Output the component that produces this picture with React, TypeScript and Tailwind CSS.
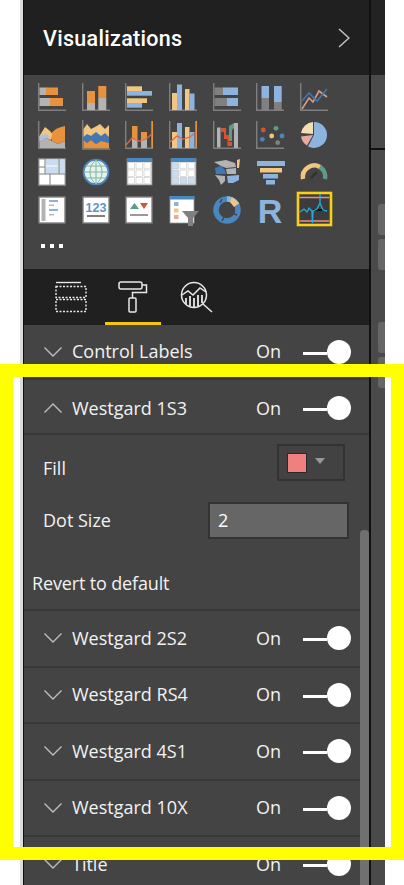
import React from "react";

const AXIS = "#7f7f7f";
const ORANGE = "#e8923f";
const CREAM = "#f2c680";
const BLUE = "#8db4de";
const GREY = "#b3b3b3";
const DARK = "#808080";
const DEEP = "#4a86c0";

const Axis = () => <path d="M0.7 0V27.3H28" fill="none" stroke={AXIS} strokeWidth="1.4" />;

const R = ({ x, y, w, h, c }: { x: number; y: number; w: number; h: number; c: string }) => (
  <rect x={x} y={y} width={w} height={h} fill={c} />
);

const Card = () => <rect x="1" y="1" width="26" height="26" fill="#fff" stroke={AXIS} strokeWidth="1.4" />;

const GridTable = ({ shaded }: { shaded?: boolean }) => (
  <>
    <rect x="2" y="1" width="25" height="26" fill="#fff" stroke={AXIS} strokeWidth="1" />
    <rect x="2" y="0" width="25" height="4" fill={DEEP} />
    {[4.5, 12, 19.5].map((y) =>
      [3, 11, 19].map((x) => (
        <rect key={`${x}-${y}`} x={x} y={y} width="6.6" height="6.4" fill={shaded && (x === 3 || y === 19.5) ? "#c9dcf0" : "#fff"} stroke="#bbb" strokeWidth="0.5" />
      ))
    )}
  </>
);

const icons: React.ReactNode[] = [
  <><Axis /><R x={1.5} y={4.5} w={7} h={7.5} c={GREY} /><R x={8} y={4.5} w={12} h={7.5} c={ORANGE} /><R x={1.5} y={15} w={11} h={8} c={GREY} /><R x={12} y={15} w={13} h={8} c={ORANGE} /></>,
  <><Axis /><R x={5} y={8} w={8} h={12} c={ORANGE} /><R x={5} y={20} w={8} h={7} c={GREY} /><R x={16.3} y={3} w={8} h={12} c={ORANGE} /><R x={16.3} y={15} w={8} h={12} c={GREY} /></>,
  <><Axis /><R x={2} y={3.3} w={15} h={4.7} c={CREAM} /><R x={2} y={8} w={25} h={4.7} c={BLUE} /><R x={2} y={15.3} w={20} h={4.7} c={CREAM} /><R x={2} y={20} w={15} h={4.7} c={BLUE} /></>,
  <><Axis /><R x={3} y={10} w={5} h={17} c={CREAM} /><R x={8} y={1.5} w={5} h={25.5} c={BLUE} /><R x={16} y={6} w={4.5} h={21} c={CREAM} /><R x={20.5} y={10.5} w={5} h={16.5} c={BLUE} /></>,
  <><Axis /><R x={1.5} y={4.5} w={9} h={7.5} c={DARK} /><R x={10} y={4.5} w={15} h={7.5} c={BLUE} /><R x={1.5} y={15} w={13} h={8} c={DARK} /><R x={14} y={15} w={11} h={8} c={BLUE} /></>,
  <><Axis /><R x={5.5} y={3} w={7.5} h={12} c={BLUE} /><R x={5.5} y={15} w={7.5} h={12} c={DARK} /><R x={18} y={3} w={7.7} h={16} c={BLUE} /><R x={18} y={19} w={7.7} h={8} c={DARK} /></>,
  <><Axis /><polyline points="2,26 9,15 13,19 19,8 27,14" fill="none" stroke="#d99a8a" strokeWidth="1.6" /><polyline points="2,18 9,10 17,18 27,6" fill="none" stroke="#3f78b5" strokeWidth="1.6" /></>,

  <><Axis /><polygon points="1.5,27 1.5,21 8,17 14,20 20,23 27,20 27,27" fill={GREY} /><polygon points="12,13 18,8 23,6 27,5 27,20 20,23 14,20" fill={ORANGE} /><polygon points="1.5,15 7,6 12,10 14,13 13,19 8,17 1.5,21" fill={CREAM} /><polygon points="1.5,15 8,13 12,16 8,17 1.5,20" fill="#a9c3e0" /></>,
  <><path d="M0.7 -1V28H28" fill="none" stroke={AXIS} strokeWidth="1.4" /><polygon points="1.5,8 5,3 9,8 13,6 18,3 23,8 27,4 27,16 1.5,16" fill={CREAM} /><polygon points="1.5,16 5,13 9,15 14,11 19,15 23,12 27,16 27,22 19,20 14,23 9,19 5,22 1.5,19" fill="#3f78b5" /><polygon points="1.5,19 5,22 9,19 14,23 19,20 27,22 27,27.3 1.5,27.3" fill={ORANGE} /></>,
  <><path d="M0.7 0V27.3H27.3V0" fill="none" stroke={AXIS} strokeWidth="1.4" /><R x={26.4} y={0} w={1.6} h={27} c={ORANGE} /><R x={7} y={5} w={5.5} h={13} c={ORANGE} /><R x={7} y={18} w={5.5} h={9} c={GREY} /><R x={16} y={11} w={6} h={7} c={ORANGE} /><R x={16} y={18} w={6} h={9} c={GREY} /><polyline points="1,24 7,17 14,20 21,18 27,13" fill="none" stroke="#d9694a" strokeWidth="1.3" /></>,
  <><path d="M0.7 0V27.3H27.3V0" fill="none" stroke={AXIS} strokeWidth="1.4" /><R x={26.4} y={0} w={1.6} h={27} c={ORANGE} /><R x={3} y={11} w={5} h={16} c={CREAM} /><R x={8} y={2} w={5} h={25} c={BLUE} /><R x={16} y={6} w={4.5} h={21} c={CREAM} /><R x={20.5} y={11} w={5} h={16} c={BLUE} /><polyline points="1,21 8,15 14,18 21,16 27,11" fill="none" stroke="#d9694a" strokeWidth="1.3" /></>,
  <><Axis /><R x={4} y={6.5} w={3.5} h={20} c={GREY} /><R x={21} y={2} w={4} h={25} c={GREY} /><polygon points="8,7 13,7 13,14 16,14 16,21 19,21 19,25 14.5,25 14.5,18 11,18 11,11 8,11" fill="#d9532e" /><polygon points="16,5 21,2 21,7 19,9 19,20 16,20" fill="#5e9c86" /></>,
  <><Axis /><circle cx="7.3" cy="9" r="2.4" fill="#d9532e" /><circle cx="20" cy="7.3" r="2.4" fill="#5e9c86" /><circle cx="6.3" cy="18.3" r="2.4" fill={DEEP} /><circle cx="15.7" cy="15" r="2.4" fill={CREAM} /><circle cx="26" cy="15" r="2.4" fill={DEEP} /><circle cx="21.7" cy="21.7" r="2.4" fill={DARK} /></>,
  <><path d="M14 1A13 13 0 1 1 8 25.5L14 14Z" fill={BLUE} /><path d="M7 24.5A13 13 0 0 1 1 15.5L13 14Z" fill="#e8aaa0" /><path d="M1 12A13 13 0 0 1 13 1V13Z" fill="#f5deb3" /></>,

  <><rect x="0.7" y="0.7" width="26.6" height="26.6" fill="#fff" stroke={AXIS} strokeWidth="1.4" /><R x={7.5} y={1.5} w={13} h={6} c="#c9dcf0" /><R x={21} y={1.5} w={5.5} h={14} c="#c9dcf0" /><R x={7.5} y={8.5} w={13} h={7} c="#c9dcf0" /><path d="M0 9H7M0 16H28M12 16V28M7 1V16M21 1V16" stroke={AXIS} strokeWidth="1" /></>,
  <><circle cx="14" cy="14" r="12.3" fill="#e6f1ee" stroke={DEEP} strokeWidth="2" /><path d="M2 14H26M4 8H24M4 20H24M14 2V26M14 2C6 8 6 20 14 26M14 2C22 8 22 20 14 26" fill="none" stroke="#7fb59f" strokeWidth="1" /></>,
  <GridTable />,
  <GridTable shaded />,
  <><polygon points="1,4 13,2 22,5 23,9 13,10 8,8" fill={GREY} /><polygon points="24,2 27,1 26,10 24,10" fill={CREAM} /><polygon points="2,10 8,8 12,12 13,16 3,16" fill="#3f78b5" /><polygon points="13,11 23,10 23,16 14,16" fill={GREY} /><polygon points="2,17 12,18 12,23 8,27 6,22" fill={GREY} /><polygon points="14,18 26,17 26,22 20,25 15,25" fill={BLUE} /></>,
  <><R x={1} y={3} w={28} h={5} c={BLUE} /><R x={4} y={10} w={22} h={4.5} c={CREAM} /><R x={7} y={16} w={15} h={4.5} c={BLUE} /><R x={10} y={22} w={9} h={4.5} c={BLUE} /></>,
  <><path d="M3 21A11.5 11.5 0 0 1 20 9" fill="none" stroke={CREAM} strokeWidth="4.5" /><path d="M20 9A11.5 11.5 0 0 1 25 21" fill="none" stroke="#5e9c86" strokeWidth="4.5" /><path d="M11 20L17 14" stroke="#333" strokeWidth="2.5" /></>,

  <><Card /><R x={3.5} y={3} w={4} h={22} c={GREY} /><R x={11} y={4} w={9} h={2} c={BLUE} /><R x={11} y={8.5} w={5} h={1.4} c={GREY} /><R x={11} y={13} w={9} h={2} c={BLUE} /><R x={11} y={18} w={5} h={1.4} c={GREY} /></>,
  <><Card /><text x="14" y="15.5" textAnchor="middle" fontFamily="'Liberation Sans', sans-serif" fontSize="12.5" fontWeight="700" fill="#5b93cc">123</text><R x={5} y={19} w={18} h={2} c="#808080" /></>,
  <><Card /><polygon points="5,13 9.5,7 14,13" fill="#5e9c86" /><polygon points="15,7 23,7 19,13" fill="#d9532e" /><R x={5} y={18} w={18} h={2} c="#999" /></>,
  <><rect x="1" y="1" width="24" height="26" fill="#fff" stroke="#999" strokeWidth="0.8" /><R x={0.5} y={0} w={25} h={3.5} c={DEEP} /><R x={5} y={6} w={4.5} h={4} c={BLUE} /><R x={5} y={12.5} w={4.5} h={4} c={CREAM} /><R x={5} y={19} w={4.5} h={4} c="#e8aaa0" /><polygon points="13,15 30,15 24,22 24,30 19,30 19,22" fill="#808080" /></>,
  <><circle cx="14" cy="14" r="11" fill="none" stroke={DEEP} strokeWidth="5.5" /><path d="M14 3A11 11 0 0 1 24 9" fill="none" stroke={BLUE} strokeWidth="5.5" /><path d="M19 1L26 7L21 11L17 6Z" fill={CREAM} /><path d="M9 3L7 7M24 19L19 17M9 25L11 21" stroke="#444" strokeWidth="1.5" /></>,
  <text x="14" y="27" textAnchor="middle" fontFamily="'Liberation Sans', sans-serif" fontSize="34" fontWeight="700" fill={BLUE}>R</text>,
  <><rect x="-2" y="-3" width="33" height="32" fill="#3c3c3c" stroke="#f7d117" strokeWidth="2.6" /><path d="M-0.5 1.5H29.5M-0.5 25H29.5" stroke="#e8908a" strokeWidth="1.6" /><path d="M13 14H26" stroke="#111" strokeWidth="2" /><path d="M0 16L4 13L7 16L9 12L12 15L12.4 27L13 15L17 13L20 7V-2V7L23 14L27 15" fill="none" stroke="#22aee6" strokeWidth="1.3" /></>,
];

const Chevron = ({ up }: { up?: boolean }) => (
  <svg width="18" height="10" viewBox="0 0 18 10" className="shrink-0">
    <path d={up ? "M0.5 9.5L9 1L17.5 9.5" : "M0.5 0.5L9 9L17.5 0.5"} fill="none" stroke="#bdbdbd" strokeWidth="1.4" />
  </svg>
);

const Toggle = () => (
  <div className="flex items-center ml-[22px]">
    <div className="w-[24px] h-[3px] mt-[3px] bg-white" />
    <div className="w-[24px] h-[24px] rounded-full bg-white" />
  </div>
);

const Row = ({ label, up, className }: { label: string; up?: boolean; className: string }) => (
  <div className={`shrink-0 flex items-center pl-[20px] pr-[18px] border-b-2 border-[#383838] ${className}`}>
    <Chevron up={up} />
    <span className="ml-[10px] text-[18px] text-[#f2f2f2]">{label}</span>
    <span className="ml-auto text-[18px] text-[#f2f2f2]">On</span>
    <Toggle />
  </div>
);

export default function App() {
  return (
    <div
      className="relative w-[404px] h-[885px] bg-white overflow-hidden flex"
      style={{ fontFamily: "'Open Sans', 'Liberation Sans', sans-serif" }}
    >
      <div className="w-[20px] shrink-0" />
      <div className="w-[3px] shrink-0 bg-[#dcdcdc]" />

      {/* PANEL */}
      <div className="relative w-[348px] shrink-0 flex flex-col border-l border-r-2 border-[#111] bg-[#444444] overflow-hidden">
        <div className="h-[75px] shrink-0 bg-[#202020] flex items-center justify-between pl-[19px] pr-[19px]">
          <span className="mt-[3px] text-[21.5px] font-medium text-white tracking-[0.3px]" style={{ fontFamily: "Roboto, sans-serif" }}>
            Visualizations
          </span>
          <svg width="12" height="20" viewBox="0 0 12 20">
            <path d="M1 1L11 10L1 19" fill="none" stroke="#c4c4c4" strokeWidth="1.5" />
          </svg>
        </div>

        {/* ICON GRID */}
        <div className="h-[194px] shrink-0 pt-[8px] pl-[14px]">
          <div className="grid grid-cols-[repeat(7,43.7px)] grid-rows-[repeat(4,37.67px)]">
            {icons.map((icon, i) => (
              <svg key={i} width="28" height="28" viewBox="0 0 28 28" className="overflow-visible">
                {icon}
              </svg>
            ))}
          </div>
          <div className="flex gap-[5px] mt-[10px] ml-[3px]">
            <div className="w-[4px] h-[4px] bg-white" />
            <div className="w-[4px] h-[4px] bg-white" />
            <div className="w-[4px] h-[4px] bg-white" />
          </div>
        </div>

        {/* TABS */}
        <div className="h-[56px] shrink-0 bg-[#202020] flex pl-[19px]">
          <div className="w-[56px] flex justify-center pt-[12px]">
            <svg width="33" height="32" viewBox="0 0 33 32" fill="none" stroke="#e8e8e8">
              <path d="M1 1.5H26" strokeWidth="1.4" />
              <rect x="1" y="5.5" width="30" height="11" strokeWidth="1.4" strokeDasharray="2 1.5" />
              <rect x="1" y="18.5" width="30" height="12" strokeWidth="1.4" strokeDasharray="2 1.5" />
            </svg>
          </div>
          <div className="w-[56px] ml-[6px] flex justify-center pt-[12px] border-b-[3px] border-[#f2c811]">
            <svg width="30" height="32" viewBox="0 0 30 32" fill="none" stroke="#e8e8e8" strokeWidth="1.5">
              <rect x="1" y="1" width="23" height="7" rx="2" />
              <path d="M24 4H28.5V11.5H14.5V17" />
              <rect x="11" y="17" width="7" height="14" rx="1" />
            </svg>
          </div>
          <div className="ml-[19px] pt-[12px]">
            <svg width="34" height="32" viewBox="0 0 34 32" fill="none" stroke="#e8e8e8" strokeWidth="1.5">
              <circle cx="14" cy="14" r="12.5" />
              <path d="M23 23L32 31" />
              <path d="M2 14L8 10L13 14L20 7L26 11" />
              <path d="M6 17V23M10 15V25M14 17V26M18 14V25M22 14V22" strokeWidth="1.8" />
            </svg>
          </div>
        </div>

        {/* FORMAT SECTIONS */}
        <div className="flex flex-col">
          <Row label="Control Labels" className="h-[55px]" />
          <Row label="Westgard 1S3" up className="h-[55px] pt-[3px]" />
          <div className="h-[176px] shrink-0 flex flex-col pt-[9px] pr-[20px] border-b-2 border-[#383838]">
            <div className="h-[37px] flex justify-between pl-[19px]">
              <span className="text-[18px] text-[#f2f2f2] pt-[11px]">Fill</span>
              <div className="w-[68px] mr-[4px] flex items-center pl-[8px] border-2 border-[#333] bg-[#424242]">
                <div className="w-[20px] h-[20px] border border-[#2a2a2a] bg-[#f08080]" />
                <div className="ml-[8px] mb-[3px] w-0 h-0 border-x-[5px] border-t-[6px] border-x-transparent border-t-[#999]" />
              </div>
            </div>
            <div className="h-[37px] mt-[21px] flex items-center pl-[19px]">
              <span className="text-[18px] text-[#f2f2f2]">Dot Size</span>
              <div className="ml-auto w-[141px] h-[37px] flex items-center pl-[8px] border-2 border-[#333] bg-[#666] text-[18px] text-white">
                2
              </div>
            </div>
            <span className="mt-[31px] pl-[8px] text-[18px] tracking-[-0.15px] text-[#f2f2f2]">Revert to default</span>
          </div>
          <Row label="Westgard 2S2" className="h-[56.5px]" />
          <Row label="Westgard RS4" className="h-[56.5px]" />
          <Row label="Westgard 4S1" className="h-[56.5px]" />
          <Row label="Westgard 10X" className="h-[56.5px]" />
          <Row label="Title" className="h-[56.5px]" />
        </div>

        {/* SCROLLBAR */}
        <div className="absolute right-0 top-[530px] bottom-0 w-[9px] rounded-t-[4px] bg-[#707070]" />
      </div>

      {/* RIGHT STRIP */}
      <div className="w-[14px] shrink-0 flex flex-col items-end bg-[#4a4a4a]">
        <div className="w-full h-[75px] bg-[#232323]" />
        <div className="w-full h-[2px] mt-[73px] bg-[#111]" />
        <div className="w-[7px] h-[31px] mt-[54px] rounded-l-[3px] bg-[#666]" />
        <div className="w-[7px] h-[31px] mt-[4px] rounded-l-[3px] bg-[#666]" />
        <div className="w-[7px] h-[31px] mt-[52px] rounded-l-[3px] bg-[#666]" />
        <div className="w-[7px] h-[31px] mt-[4px] rounded-l-[3px] bg-[#666]" />
      </div>

      {/* HIGHLIGHT FRAME */}
      <div className="absolute left-0 top-[364px] w-[404px] h-[496px] border-[13px] border-[#ffff00]" />
    </div>
  );
}
